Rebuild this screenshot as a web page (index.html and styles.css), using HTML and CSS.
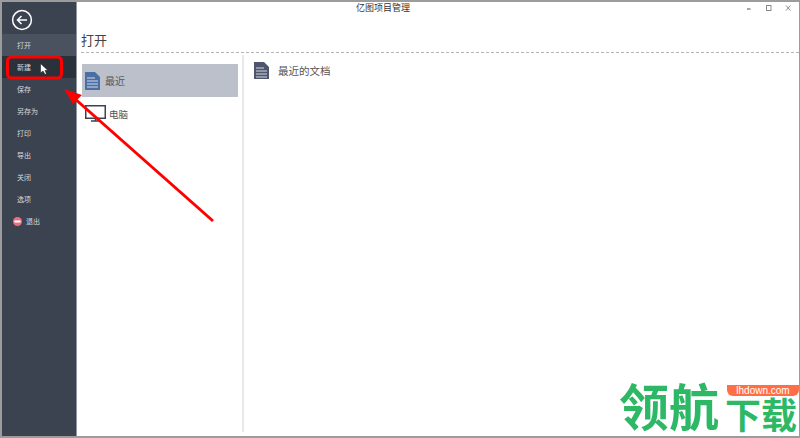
FILE: index.html
```html
<!DOCTYPE html>
<html lang="zh-CN">
  <head>
    <meta charset="UTF-8" />
    <title>亿图项目管理</title>
    <link rel="stylesheet" href="styles.css">
  </head>
  <body>
    <div class="window">
      <div class="sidebar">
        <div class="back">
          <svg width="22" height="22" viewBox="0 0 22 22" fill="none" stroke="#fff">
            <circle cx="11" cy="11" r="9.4" stroke-width="1.5" />
            <path d="M16 11H6.5M10.5 7L6.5 11L10.5 15" stroke-width="1.5" />
          </svg>
        </div>
        <div class="menu-item active">打开</div>
        <div class="menu-item hover">新建</div>
        <div class="menu-item">保存</div>
        <div class="menu-item">另存为</div>
        <div class="menu-item">打印</div>
        <div class="menu-item">导出</div>
        <div class="menu-item">关闭</div>
        <div class="menu-item">选项</div>
        <div class="menu-item exit">
          <svg width="9" height="9" viewBox="0 0 9 9">
            <circle cx="4.5" cy="4.5" r="4.5" fill="#e9707f" />
            <rect x="1.5" y="3.5" width="6" height="2" fill="#fff" />
          </svg>
          退出
        </div>
      </div>

      <div class="main">
        <div class="titlebar">
          <div class="title">亿图项目管理</div>
          <div class="controls">
            <svg class="controls-icons" width="50" height="10" viewBox="0 0 50 10" fill="none" stroke="#8a8a8a">
              <path d="M0 6H3.5" stroke-width="1.5" />
              <rect x="19.5" y="2.5" width="4.5" height="5" />
              <path d="M39 2.5L43.5 7.5M43.5 2.5L39 7.5" />
            </svg>
          </div>
        </div>
        <h2 class="page-title">打开</h2>
        <div class="content">
          <div class="places">
            <div class="place selected">
              <svg width="15" height="18" viewBox="0 0 15 18">
                <path d="M0 0H10L15 5V18H0Z" fill="#4a6fa5" />
                <path d="M2 6H10M2 9H13M2 12H13M2 15H13" stroke="#d5dbe6" />
              </svg>
              <span>最近</span>
            </div>
            <div class="place computer">
              <svg width="21" height="17" viewBox="0 0 21 17" fill="none" stroke="#3c4350">
                <rect x="0.75" y="0.75" width="19.5" height="12.5" stroke-width="1.5" />
                <path d="M10.5 13V15.5M6 16H15" stroke-width="1.5" />
              </svg>
              <span>电脑</span>
            </div>
          </div>
          <div class="recent">
            <svg width="15" height="17" viewBox="0 0 15 17">
              <path d="M0 0H10L15 5V17H0Z" fill="#4d566e" />
              <path d="M2 6H10M2 9H13M2 12H13M2 15H13" stroke="#d5d8e0" />
            </svg>
            <span>最近的文档</span>
          </div>
        </div>
      </div>

      <svg class="notes" width="800" height="438" viewBox="0 0 800 438" fill="none">
        <rect x="7.5" y="57" width="54" height="21" rx="4" stroke="#f00" stroke-width="3" />
        <path d="M213 221L74 98" stroke="#f00" stroke-width="3" />
        <path d="M64 89L82 95L73 104Z" fill="#f00" />
        <path d="M40.5 63.5V73L43 71L45 74.5L46.5 73.5L45 70.5H48Z" fill="#fff" stroke="#222" stroke-width="0.6" />
      </svg>

      <div class="logo">
        <span class="logo-big">领航</span><span class="logo-small">下载</span>
        <span class="logo-badge">lhdown.com</span>
      </div>
    </div>
  </body>
</html>
```

FILE: styles.css
```css
* {
  box-sizing: border-box;
}

body {
  margin: 0;
  font-family: "Noto Sans CJK SC", "Liberation Sans", sans-serif;
  background-color: #fff;
}

.window {
  position: relative;
  display: flex;
  width: 800px;
  height: 438px;
  background-color: #fff;
  border-top: 2px solid #9c9c9c;
  border-left: 2px solid #9c9c9c;
  border-right: 1px solid #9c9c9c;
  border-bottom: 2px solid #9c9c9c;
}

.sidebar {
  width: 75px;
  height: 434px;
  background-color: #3c4350;
  flex-shrink: 0;
  border-right: 1px solid #8f96a3;
}

.back {
  display: flex;
  align-items: center;
  height: 32px;
  padding: 4px 0 0 9px;
}

.menu-item {
  display: flex;
  align-items: center;
  height: 22px;
  padding-left: 15px;
  font-size: 7px;
  color: #d6d9de;
}

.menu-item.active {
  background-color: #4a525f;
}

.menu-item.hover {
  background-color: #2b313b;
}

.menu-item.exit {
  gap: 4px;
  padding-left: 11px;
}

.main {
  flex: 1;
  display: flex;
  flex-direction: column;
  min-width: 0;
}

.titlebar {
  display: flex;
  justify-content: center;
  position: relative;
  height: 13px;
  padding-right: 110px;
}

.title {
  font-size: 9px;
  line-height: 11px;
  color: #333;
}

.controls {
  position: absolute;
  top: 1px;
  right: 2px;
  width: 50px;
}

.controls-icons {
  display: block;
}

.page-title {
  margin: 0 0 0 4px;
  height: 38px;
  padding-top: 15px;
  font-size: 13px;
  line-height: 20px;
  font-weight: 400;
  color: #444;
  border-bottom: 1px dashed #b5b5b5;
}

.content {
  flex: 1;
  display: flex;
  padding-left: 5px;
  padding-bottom: 4px;
}

.places {
  width: 162px;
  padding-top: 9px;
  padding-right: 4px;
  border-right: 2px solid #e8e8e8;
  margin-top: 2px;
}

.place {
  display: flex;
  align-items: center;
  height: 33px;
  font-size: 10px;
  color: #555;
}

.place.selected {
  gap: 5px;
  padding-left: 3px;
  background-color: #bcc0cb;
}

.place.computer {
  gap: 3px;
  padding-left: 3px;
  font-size: 9.5px;
}

.recent {
  display: flex;
  align-items: center;
  gap: 9px;
  height: 18px;
  margin-top: 8px;
  padding-left: 10px;
  font-size: 10.5px;
  color: #555;
}

.notes {
  position: absolute;
  top: -2px;
  left: -2px;
}

.logo {
  position: absolute;
  right: 0;
  bottom: 0;
  width: 180px;
  height: 56px;
  color: #2db866;
  font-family: "Liberation Sans", "Noto Sans CJK SC", sans-serif;
  font-weight: 700;
  white-space: nowrap;
}

.logo-big {
  position: absolute;
  left: 0;
  top: 4px;
  font-size: 50px;
  line-height: 50px;
}

.logo-small {
  position: absolute;
  left: 106px;
  top: 20px;
  font-size: 36px;
  line-height: 34px;
}

.logo-badge {
  position: absolute;
  left: 108px;
  top: 5px;
  width: 72px;
  height: 11px;
  border-radius: 0 0 6px 6px;
  background-color: #ff6f45;
  color: #fff;
  font-size: 10px;
  font-weight: 400;
  line-height: 11px;
  text-align: center;
}
```
